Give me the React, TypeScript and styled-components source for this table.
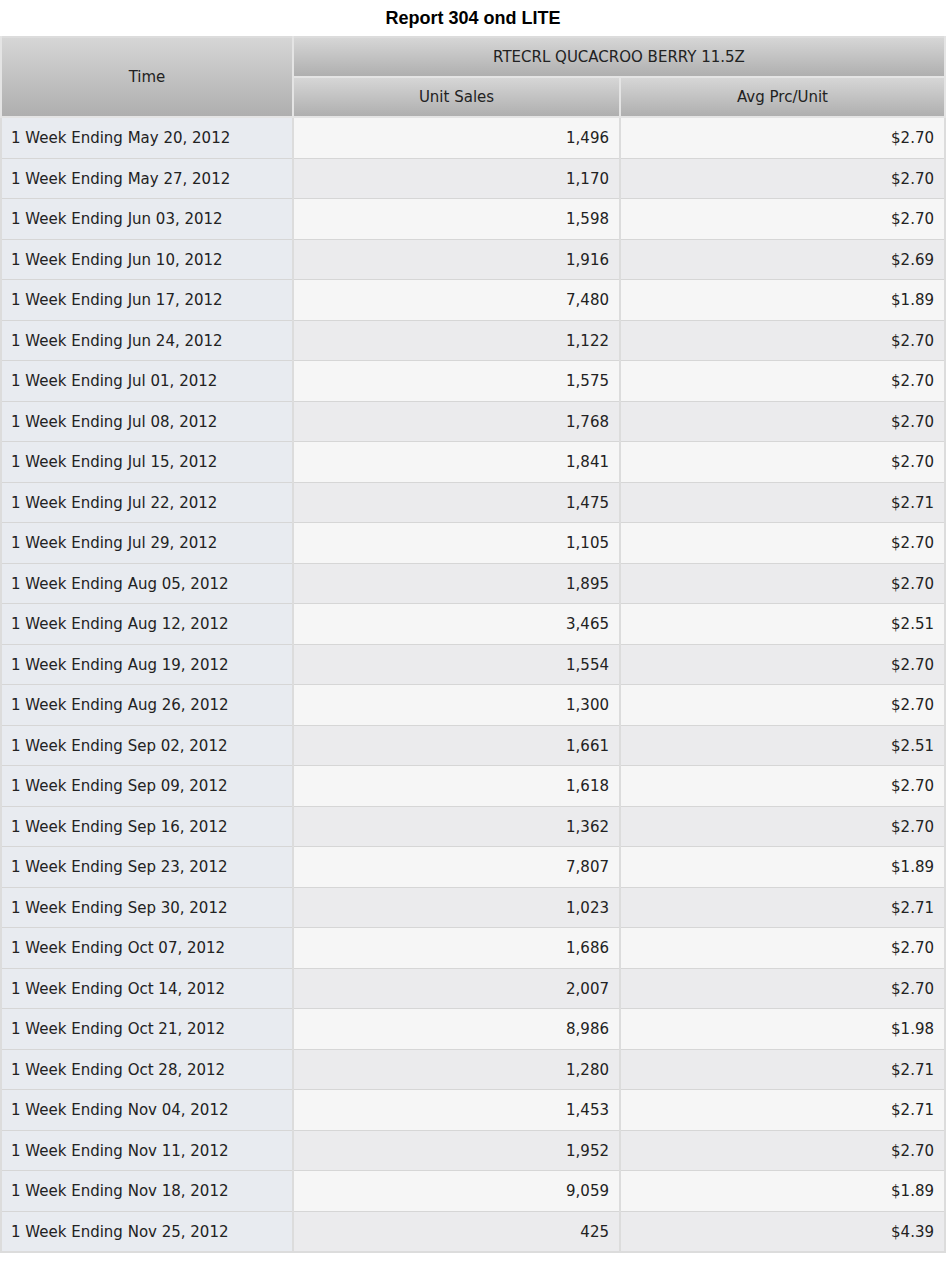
import React from "react";
import styled, { createGlobalStyle } from "styled-components";

const GlobalStyle = createGlobalStyle`
  body {
    margin: 0;
    background: #fff;
    font-family: "DejaVu Sans", Verdana, sans-serif;
  }
`;

interface Row {
  week: string;
  units: string;
  price: string;
}

const rows: Row[] = [
  { week: "May 20, 2012", units: "1,496", price: "$2.70" },
  { week: "May 27, 2012", units: "1,170", price: "$2.70" },
  { week: "Jun 03, 2012", units: "1,598", price: "$2.70" },
  { week: "Jun 10, 2012", units: "1,916", price: "$2.69" },
  { week: "Jun 17, 2012", units: "7,480", price: "$1.89" },
  { week: "Jun 24, 2012", units: "1,122", price: "$2.70" },
  { week: "Jul 01, 2012", units: "1,575", price: "$2.70" },
  { week: "Jul 08, 2012", units: "1,768", price: "$2.70" },
  { week: "Jul 15, 2012", units: "1,841", price: "$2.70" },
  { week: "Jul 22, 2012", units: "1,475", price: "$2.71" },
  { week: "Jul 29, 2012", units: "1,105", price: "$2.70" },
  { week: "Aug 05, 2012", units: "1,895", price: "$2.70" },
  { week: "Aug 12, 2012", units: "3,465", price: "$2.51" },
  { week: "Aug 19, 2012", units: "1,554", price: "$2.70" },
  { week: "Aug 26, 2012", units: "1,300", price: "$2.70" },
  { week: "Sep 02, 2012", units: "1,661", price: "$2.51" },
  { week: "Sep 09, 2012", units: "1,618", price: "$2.70" },
  { week: "Sep 16, 2012", units: "1,362", price: "$2.70" },
  { week: "Sep 23, 2012", units: "7,807", price: "$1.89" },
  { week: "Sep 30, 2012", units: "1,023", price: "$2.71" },
  { week: "Oct 07, 2012", units: "1,686", price: "$2.70" },
  { week: "Oct 14, 2012", units: "2,007", price: "$2.70" },
  { week: "Oct 21, 2012", units: "8,986", price: "$1.98" },
  { week: "Oct 28, 2012", units: "1,280", price: "$2.71" },
  { week: "Nov 04, 2012", units: "1,453", price: "$2.71" },
  { week: "Nov 11, 2012", units: "1,952", price: "$2.70" },
  { week: "Nov 18, 2012", units: "9,059", price: "$1.89" },
  { week: "Nov 25, 2012", units: "425", price: "$4.39" },
];

const Title = styled.h1`
  margin: 0;
  height: 36px;
  line-height: 36px;
  text-align: center;
  font-family: "Liberation Sans", Arial, sans-serif;
  font-size: 18px;
  font-weight: bold;
  color: #000;
`;

const Table = styled.table`
  width: 100%;
  border-collapse: collapse;
  border: 2px solid #dcdcdc;
  table-layout: fixed;
  font-size: 15px;
  color: #222;
`;

const HeadCell = styled.th`
  background: linear-gradient(to bottom, #d6d6d6, #afafaf);
  border: 2px solid #e4e4e4;
  border-top: 0;
  font-weight: normal;
  color: #222;
  height: 38px;
  padding: 0;
  text-align: center;
`;

const TimeCell = styled.td`
  background: #e8ebf0;
  border: 1px solid #d6d6d6;
  border-right: 2px solid #dcdcdc;
  padding: 1px 9px 0;
  height: 38.5px;
  white-space: nowrap;
`;

const ValueCell = styled.td<{ $odd: boolean }>`
  background: ${(p) => (p.$odd ? "#ebebed" : "#f6f6f6")};
  border: 1px solid #d6d6d6;
  border-right: 2px solid #dcdcdc;
  padding: 1px 10px 0;
  height: 38.5px;
  text-align: right;
`;

export default function App() {
  return (
    <>
      <GlobalStyle />
      <Title>Report 304 ond LITE</Title>
      <Table>
        <colgroup>
          <col style={{ width: 292 }} />
          <col style={{ width: 327 }} />
          <col />
        </colgroup>
        <thead>
          <tr>
            <HeadCell rowSpan={2}>Time</HeadCell>
            <HeadCell colSpan={2}>RTECRL QUCACROO BERRY 11.5Z</HeadCell>
          </tr>
          <tr>
            <HeadCell>Unit Sales</HeadCell>
            <HeadCell>Avg Prc/Unit</HeadCell>
          </tr>
        </thead>
        <tbody>
          {rows.map((r, i) => (
            <tr key={r.week}>
              <TimeCell>1 Week Ending {r.week}</TimeCell>
              <ValueCell $odd={i % 2 === 1}>{r.units}</ValueCell>
              <ValueCell $odd={i % 2 === 1}>{r.price}</ValueCell>
            </tr>
          ))}
        </tbody>
      </Table>
    </>
  );
}
